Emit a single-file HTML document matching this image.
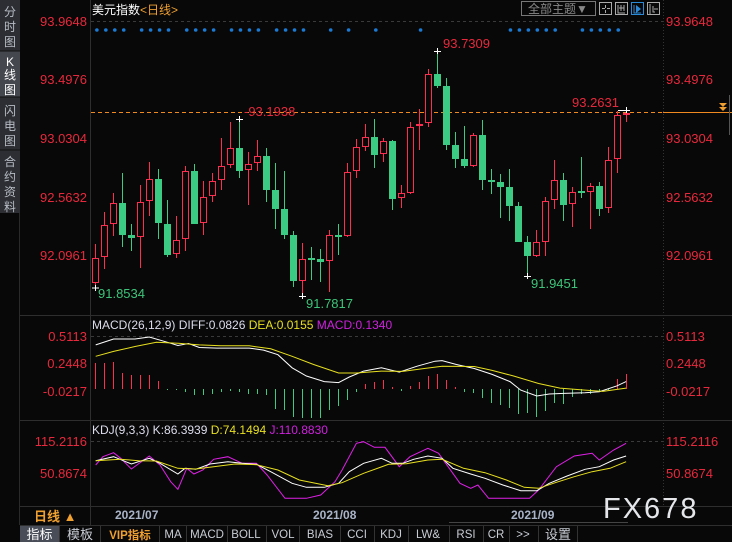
<!DOCTYPE html>
<html><head><meta charset="utf-8"><style>
html,body{margin:0;padding:0;background:#080808;width:732px;height:542px;overflow:hidden}
svg{display:block}
text{font-family:"Liberation Sans","Noto Sans CJK SC",sans-serif}
.m{font-family:"Liberation Mono","Noto Sans CJK SC",monospace}
</style></head><body>
<svg id="s" width="732" height="542" xmlns="http://www.w3.org/2000/svg">
<rect width="732" height="542" fill="#080808"/>
<rect x="0" y="0" width="20" height="213" fill="#2c2e33"/>
<rect x="0" y="51" width="20" height="46" fill="#44474e"/>
<line x1="0" y1="51" x2="20" y2="51" stroke="#111"/><line x1="0" y1="97" x2="20" y2="97" stroke="#111"/><line x1="0" y1="150" x2="20" y2="150" stroke="#111"/>
<line x1="19.5" y1="213" x2="19.5" y2="525" stroke="#2a2a2a"/>
<g fill="#b8bcc4" font-size="12" text-anchor="middle">
<text x="10" y="16">分</text><text x="10" y="31">时</text><text x="10" y="46">图</text>
<text x="10" y="66" fill="#fff">K</text><text x="10" y="79" fill="#fff">线</text><text x="10" y="94" fill="#fff">图</text>
<text x="10" y="115">闪</text><text x="10" y="130">电</text><text x="10" y="145">图</text>
<text x="10" y="166">合</text><text x="10" y="181">约</text><text x="10" y="196">资</text><text x="10" y="211">料</text>
</g>
<line x1="90.5" y1="0" x2="90.5" y2="525" stroke="#2e2e2e"/>
<line x1="663.5" y1="0" x2="663.5" y2="506" stroke="#333" stroke-dasharray="1,2"/>
<g stroke="#2e2e2e"><line x1="20" y1="315.5" x2="732" y2="315.5"/><line x1="20" y1="420.5" x2="732" y2="420.5"/><line x1="20" y1="506.5" x2="732" y2="506.5"/><line x1="20" y1="525.5" x2="732" y2="525.5"/></g>
<g stroke="#3a3a3a" stroke-dasharray="3,3"><line x1="91" y1="21.5" x2="663" y2="21.5"/><line x1="91" y1="336.5" x2="663" y2="336.5"/><line x1="91" y1="441.5" x2="663" y2="441.5"/></g>
<text x="92" y="14" font-size="12" fill="#fff">美元指数<tspan fill="#f0a030">&lt;日线&gt;</tspan></text>
<rect x="521.5" y="1.5" width="74" height="14" fill="none" stroke="#777"/>
<text x="528" y="13" font-size="12" fill="#888">全部主题▼</text>
<g fill="none" stroke="#aaa"><rect x="599.5" y="2.5" width="12" height="12"/><rect x="615.5" y="2.5" width="12" height="12"/><rect x="631.5" y="2.5" width="12" height="12" stroke="#2a8ad8"/><rect x="647.5" y="2.5" width="12" height="12"/>
<path d="M605.5 5v3M605.5 10v3M602 8.5h3M607 8.5h3"/><path d="M618 5v8h7M621 5v6M624 5v6M619 8h5"/><path d="M634 5v8h7" stroke="#2a8ad8"/><path d="M650 4v10M653 6v6h2M654 9h4"/></g>
<path d="M636 5l5 4-5 4z" fill="#2a8ad8"/>
<g font-size="13" fill="#e8283c" text-anchor="end">
<text x="87" y="26">93.9648</text><text x="87" y="84">93.4976</text><text x="87" y="143">93.0304</text><text x="87" y="202">92.5632</text><text x="87" y="260">92.0961</text>
<text x="87" y="341">0.5113</text><text x="87" y="368">0.2448</text><text x="87" y="396">-0.0217</text>
<text x="87" y="446">115.2116</text><text x="87" y="478">50.8674</text>
</g>
<g font-size="13" fill="#e8283c">
<text x="666" y="26">93.9648</text><text x="666" y="84">93.4976</text><text x="666" y="143">93.0304</text><text x="666" y="202">92.5632</text><text x="666" y="260">92.0961</text>
<text x="666" y="341">0.5113</text><text x="666" y="368">0.2448</text><text x="666" y="396">-0.0217</text>
<text x="666" y="446">115.2116</text><text x="666" y="478">50.8674</text>
</g>
<line x1="91" y1="112.5" x2="663" y2="112.5" stroke="#f08a20" stroke-dasharray="4,3"/>
<line x1="663" y1="112.5" x2="732" y2="112.5" stroke="#f08a20"/>
<path d="M719 103h8l-4 4zM719 107h8l-4 4z" fill="#f0a030"/>
<line x1="729.5" y1="95" x2="729.5" y2="135" stroke="#555"/>
<g id="dots" fill="#1a7ad4"></g>
<g id="c"></g>
<g id="h"></g>
<g font-size="13">
<text x="98" y="298" fill="#3cc47a">91.8534</text>
<text x="306" y="308" fill="#3cc47a">91.7817</text>
<text x="531" y="288" fill="#3cc47a">91.9451</text>
<text x="244" y="116" fill="#e8283c">-93.1938</text>
<text x="443" y="48" fill="#e8283c">93.7309</text>
<text x="572" y="107" fill="#e8283c">93.2631</text>
</g>
<g stroke="#fff"><path d="M92 288h7M95.5 285v6"/><path d="M236 119.5h7M239.5 116v6"/><path d="M299 296.5h7M302.5 293v6"/><path d="M434 51.5h7M437.5 48v6"/><path d="M524 276.5h7M527.5 273v6"/><path d="M618 110.5h12M626.5 107v6"/></g>
<text x="92" y="329" font-size="12"><tspan fill="#dde">MACD(26,12,9) DIFF:0.0826 </tspan><tspan fill="#e8e020">DEA:0.0155 </tspan><tspan fill="#d020e0">MACD:0.1340</tspan></text>
<text x="92" y="434" font-size="12"><tspan fill="#dde">KDJ(9,3,3) K:86.3939 </tspan><tspan fill="#e8e020">D:74.1494 </tspan><tspan fill="#d020e0">J:110.8830</tspan></text>
<g id="l" fill="none" stroke-width="1"></g>
<text x="34" y="521" font-size="13" fill="#f0a030" font-weight="bold">日线 ▲</text>
<g font-size="12" fill="#aab4c8" font-weight="bold"><text x="115" y="519">2021/07</text><text x="313" y="519">2021/08</text><text x="511" y="519">2021/09</text></g>
<line x1="449" y1="522.5" x2="628" y2="522.5" stroke="#444"/>
<text x="603" y="518" font-size="29" fill="#e4e6ea" letter-spacing="2">FX678</text>
<rect x="20" y="526" width="39" height="16" fill="#484d58"/>
<g stroke="#333"><line x1="59.5" y1="526" x2="59.5" y2="542"/><line x1="100.5" y1="526" x2="100.5" y2="542"/><line x1="159.5" y1="526" x2="159.5" y2="542"/><line x1="186.5" y1="526" x2="186.5" y2="542"/><line x1="227.5" y1="526" x2="227.5" y2="542"/><line x1="266.5" y1="526" x2="266.5" y2="542"/><line x1="299.5" y1="526" x2="299.5" y2="542"/><line x1="340.5" y1="526" x2="340.5" y2="542"/><line x1="374.5" y1="526" x2="374.5" y2="542"/><line x1="408.5" y1="526" x2="408.5" y2="542"/><line x1="449.5" y1="526" x2="449.5" y2="542"/><line x1="483.5" y1="526" x2="483.5" y2="542"/><line x1="509.5" y1="526" x2="509.5" y2="542"/><line x1="538.5" y1="526" x2="538.5" y2="542"/><line x1="577.5" y1="526" x2="577.5" y2="542"/></g>
<g font-size="11.5" fill="#c8ccd4" text-anchor="middle" class="m">
<text x="39.5" y="539" fill="#fff" font-size="13">指标</text><text x="80" y="539" font-size="13">模板</text><text x="130" y="539" fill="#f0a030" font-weight="bold">VIP指标</text>
<text x="173" y="538">MA</text><text x="207" y="538">MACD</text><text x="246" y="538">BOLL</text><text x="283" y="538">VOL</text><text x="320" y="538">BIAS</text><text x="357" y="538">CCI</text><text x="391" y="538">KDJ</text><text x="428" y="538">LW&amp;</text><text x="466" y="538">RSI</text><text x="496" y="538">CR</text><text x="523" y="538">&gt;&gt;</text><text x="558" y="539" font-size="13">设置</text>
</g>
</svg>
<script>
var NS="http://www.w3.org/2000/svg";
function el(p,t,a){var e=document.createElementNS(NS,t);for(var k in a)e.setAttribute(k,a[k]);p.appendChild(e);return e}
var R="#ff2d4f",G="#3ccb82";
var d=[
"r 258 283 244 287","r 225 257 212 269","r 203 224 193 236","g 203 235 173 247","g 235 238 224 251","r 202 237 185 268","r 179 201 162 216","g 179 223 169 239","g 224 255 200 257","r 240 254 216 258",
"r 171 239 166 251","g 171 224 164 224","r 197 223 181 235","r 181 196 173 202","r 166 180 138 190","r 148 165 122 168","g 148 171 119 178","r 164 170 152 205","r 156 163 140 171","g 156 190 148 202",
"g 190 209 163 229","g 209 235 171 239","g 235 281 231 287","r 259 281 243 296","g 258 260 247 280","g 259 262 249 282","r 235 261 230 292","g 235 236 224 255","r 172 236 163 237","r 147 171 139 178",
"r 137 147 124 151","g 137 155 119 168","r 141 154 138 162","g 141 199 140 210","r 193 198 185 208","r 127 193 122 194","r 124 126 109 150","r 74 123 69 127","g 74 86 51 88","g 86 145 78 150",
"g 145 159 132 168","g 159 166 126 168","r 135 166 133 167","g 135 180 120 190","g 180 182 169 194","g 182 187 174 218","g 187 206 169 221","g 206 242 202 242","g 242 256 236 276","r 242 256 230 257",
"r 201 242 197 256","r 180 200 160 209","g 180 205 173 221","r 192 204 187 227","g 191 193 157 198","r 186 192 183 229","g 186 209 182 216","r 160 208 147 213","r 115 159 111 173","r 113 114 111 122"];
var c=document.getElementById("c");
d.forEach(function(s,i){var a=s.split(" "),x=95+9*i,t=+a[1],b=+a[2],wt=+a[3],wb=+a[4],col=a[0]=="r"?R:G;
el(c,"line",{x1:x+.5,x2:x+.5,y1:wt,y2:wb,stroke:col});
if(b-t<3){el(c,"rect",{x:x-3,y:t,width:7,height:Math.max(2,b-t),fill:col});}
else if(a[0]=="r")el(c,"rect",{x:x-2.5,y:t+.5,width:6,height:b-t-1,fill:"#080808",stroke:col});
else el(c,"rect",{x:x-3,y:t,width:7,height:b-t,fill:col});});
var hv=[26,26,27,16,14,14,14,8,-1,-1,-3,-6,-6,-5,-3,-2,-3,-5,-5,-6,-20,-21,-28,-29,-29,-29,-21,-17,-11,-3,5,7,9,2,-2,3,7,13,15,9,2,-3,-4,-9,-14,-16,-19,-25,-24,-28,-22,-14,-15,-8,-5,-5,-3,-1,10,15];
var h=document.getElementById("h");
hv.forEach(function(v,i){var x=95.5+9*i;el(h,"line",{x1:x,x2:x,y1:389,y2:389-v,stroke:v>0?R:G});});
var dz=[20,46,72,98,150,176,202,228,281,307,333,359,411,437,463,489,542,568,594,620,699,751,830,960,1221,1247,1273,1299,1325,1351,1430,1456,1482,1508,1534];
var dg=document.getElementById("dots");
dz.forEach(function(z){el(dg,"circle",{cx:90+z/2.904,cy:30,r:1.8});});
function pl(pts,col,y0,ys){var s=[];for(var i=0;i<pts.length;i+=2)s.push((85+pts[i]/2.8).toFixed(1)+","+(y0+(pts[i+1]-73)/ys).toFixed(1));el(document.getElementById("l"),"polyline",{points:s.join(" "),stroke:col})}
pl([30,100,80,82,140,82,180,76,230,92,260,102,290,96,320,108,370,110,460,110,500,116,540,130,580,170,620,195,670,212,710,215,740,198,780,180,830,170,880,183,930,165,980,150,1000,148,1040,160,1090,172,1140,190,1190,212,1220,238,1265,256,1300,250,1340,248,1400,246,1440,243,1490,225,1515,212],"#fff",336,3.05);
pl([30,135,80,120,140,105,200,92,260,95,320,100,380,103,460,103,520,112,580,135,640,160,710,186,760,186,830,180,890,181,950,172,1000,165,1090,166,1140,178,1200,195,1270,218,1330,232,1400,238,1450,242,1515,232],"#e8e020",336,3.05);
pl([30,145,50,120,80,108,100,125,130,157,180,118,210,145,240,195,260,218,285,155,305,172,330,160,360,128,400,120,440,140,480,140,510,175,560,245,620,245,660,235,700,195,720,160,760,80,780,75,810,92,840,92,880,150,910,120,960,95,990,110,1010,140,1050,200,1080,215,1100,205,1130,245,1245,245,1270,220,1320,150,1370,118,1420,110,1440,130,1480,100,1515,80],"#e020e8",441,3.0);
pl([30,132,80,120,130,142,180,125,210,140,260,172,280,155,310,158,350,142,400,135,440,140,480,143,520,165,580,200,620,212,670,212,710,200,740,165,780,140,830,125,860,140,890,140,920,128,960,118,1000,125,1030,155,1080,172,1120,185,1170,205,1220,222,1265,222,1300,200,1350,178,1400,158,1440,150,1480,130,1515,118],"#fff",441,3.0);
pl([30,132,100,128,150,132,200,133,260,155,310,157,360,150,420,142,480,144,540,160,600,190,680,207,720,198,780,170,850,143,900,141,960,130,1000,128,1060,155,1120,168,1180,190,1230,212,1270,215,1320,197,1370,180,1420,165,1470,155,1515,135],"#e8e020",441,3.0);
</script>
</body></html>
